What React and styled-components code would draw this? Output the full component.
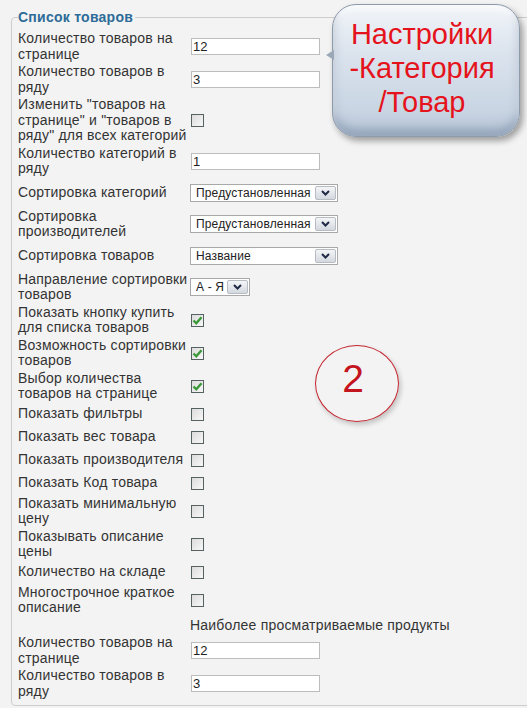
import React from 'react'
import styled, { createGlobalStyle } from 'styled-components'

const GlobalStyle = createGlobalStyle`
  html, body {
    margin: 0;
    padding: 0;
    background: #f3f3f3;
    overflow: hidden;
  }
  body {
    font-family: "Liberation Sans", Arial, sans-serif;
    font-size: 14px;
    color: #333;
  }
`

const Page = styled.div`
  position: relative;
  width: 527px;
  height: 708px;
  padding: 9px 0 0 11px;
  box-sizing: border-box;
  overflow: hidden;
`

const Fieldset = styled.fieldset`
  margin: 0 -30px 0 0;
  padding: 5px 0 5px 6px;
  border: 1px solid #cdcdcd;
  border-radius: 4px;
  min-width: 0;
`

const Legend = styled.legend`
  padding: 0 2px 0 0;
  font-weight: bold;
  font-size: 14px;
  letter-spacing: 0.25px;
  line-height: 16px;
  color: #2d6b98;
`

const Row = styled.div`
  display: flex;
  align-items: center;
  padding: 1px 0;
  line-height: 15.5px;
`

const Label = styled.div`
  width: 172px;
  flex-shrink: 0;
  white-space: pre-line;
  letter-spacing: 0.2px;
`

const Field = styled.div`
  display: flex;
  align-items: center;
`

const TextInput = styled.input`
  box-sizing: border-box;
  width: 129px;
  height: 17px;
  margin: 0 0 0 1px;
  padding: 0 1px;
  border: 1px solid #bdbdbd;
  background: #fff;
  font: 13px "Liberation Sans", Arial, sans-serif;
  color: #222;
  outline: none;
`

const SelectBox = styled.div`
  box-sizing: border-box;
  display: flex;
  align-items: center;
  width: ${(p) => p.$width}px;
  height: 18px;
  margin: 5px 0;
  border: 1px solid #a9a9a9;
  background: #fff;
`

const SelectText = styled.select`
  appearance: none;
  flex: 1;
  min-width: 0;
  height: 16px;
  border: none;
  padding: 0 0 0 5px;
  background: transparent;
  font: 12px "Liberation Sans", Arial, sans-serif;
  letter-spacing: 0.15px;
  color: #222;
  outline: none;
`

const Arrow = styled.span`
  box-sizing: border-box;
  display: flex;
  align-items: center;
  justify-content: center;
  flex-shrink: 0;
  width: 21px;
  height: 14px;
  margin-right: 1px;
  border: 1px solid #b7bcc3;
  border-radius: 2px;
  background: linear-gradient(#f4f5f7, #d3d8df);
`

const Box = styled.span`
  box-sizing: border-box;
  display: flex;
  align-items: center;
  justify-content: center;
  width: 13px;
  height: 13px;
  margin: 4px 0 4px 1px;
  border: 1px solid #566262;
  background: linear-gradient(135deg, #dcdcdc, #f7f7f7);
`

const SubHeading = styled.div`
  letter-spacing: 0.2px;
`

const Bubble = styled.div`
  position: absolute;
  left: 332px;
  top: 4px;
  width: 188px;
  height: 133px;
  box-sizing: border-box;
  padding: 12px 8px 0 0;
  border: 1px solid #8e9bab;
  border-radius: 24px;
  background: linear-gradient(#f2f5f9 0%, #dce4ee 35%, #c9d5e3 80%, #b6c4d5 100%);
  box-shadow: 3px 4px 6px rgba(0, 0, 0, 0.35), inset 0 -7px 10px rgba(110, 130, 158, 0.5),
    inset 0 3px 6px rgba(255, 255, 255, 0.9);
  text-align: center;
  font-size: 29px;
  line-height: 34px;
  color: #e5131c;

  &::before {
    content: '';
    position: absolute;
    left: -7px;
    top: 45px;
    border-style: solid;
    border-width: 5px 8px 5px 0;
    border-color: transparent #9aa8b8 transparent transparent;
  }
`

const Circle = styled.div`
  position: absolute;
  left: 315px;
  top: 345px;
  width: 84px;
  height: 77px;
  box-sizing: border-box;
  display: flex;
  align-items: center;
  justify-content: center;
  padding: 0 8px 9px 0;
  border: 1.5px solid #c3252e;
  border-radius: 50%;
  box-shadow: 2px 3px 5px rgba(0, 0, 0, 0.2);
  font-size: 39px;
  color: #c4141d;
`

const rows = [
  { label: 'Количество товаров на\nстранице', type: 'input', value: '12' },
  { label: 'Количество товаров в\nряду', type: 'input', value: '3' },
  { label: 'Изменить "товаров на\nстранице" и "товаров в\nряду" для всех категорий', type: 'check' },
  { label: 'Количество категорий в\nряду', type: 'input', value: '1' },
  { label: 'Сортировка категорий', type: 'select', value: 'Предустановленная', width: 148 },
  { label: 'Сортировка\nпроизводителей', type: 'select', value: 'Предустановленная', width: 148 },
  { label: 'Сортировка товаров', type: 'select', value: 'Название', width: 148 },
  { label: 'Направление сортировки\nтоваров', type: 'select', value: 'А - Я', width: 60 },
  { label: 'Показать кнопку купить\nдля списка товаров', type: 'check', checked: true },
  { label: 'Возможность сортировки\nтоваров', type: 'check', checked: true },
  { label: 'Выбор количества\nтоваров на странице', type: 'check', checked: true },
  { label: 'Показать фильтры', type: 'check' },
  { label: 'Показать вес товара', type: 'check' },
  { label: 'Показать производителя', type: 'check' },
  { label: 'Показать Код товара', type: 'check' },
  { label: 'Показать минимальную\nцену', type: 'check' },
  { label: 'Показывать описание\nцены', type: 'check' },
  { label: 'Количество на складе', type: 'check' },
  { label: 'Многострочное краткое\nописание', type: 'check' },
  { label: '', type: 'heading', value: 'Наиболее просматриваемые продукты' },
  { label: 'Количество товаров на\nстранице', type: 'input', value: '12' },
  { label: 'Количество товаров в\nряду', type: 'input', value: '3' },
]

const Checkbox = ({ checked }) => (
  <Box>
    {checked && (
      <svg width="11" height="11" viewBox="0 0 11 11">
        <path d="M1.5 5.5 L4.3 8.3 L9.5 2.2" fill="none" stroke="#3a9a3a" strokeWidth="2.4" />
      </svg>
    )}
  </Box>
)

const Select = ({ value, width }) => (
  <SelectBox $width={width}>
    <SelectText defaultValue={value}>
      <option>{value}</option>
    </SelectText>
    <Arrow>
      <svg width="9" height="6" viewBox="0 0 9 6">
        <path d="M1 1 L4.5 4.5 L8 1" fill="none" stroke="#1f2b45" strokeWidth="2" />
      </svg>
    </Arrow>
  </SelectBox>
)

const renderField = (row) => {
  if (row.type === 'input') return <TextInput defaultValue={row.value} />
  if (row.type === 'select') return <Select value={row.value} width={row.width} />
  if (row.type === 'check') return <Checkbox checked={row.checked} />
  return <SubHeading>{row.value}</SubHeading>
}

const App = () => {
  return (
    <Page>
      <GlobalStyle />
      <Fieldset>
        <Legend>Список товаров</Legend>
        {rows.map((row, i) => (
          <Row key={i}>
            <Label>{row.label}</Label>
            <Field>{renderField(row)}</Field>
          </Row>
        ))}
      </Fieldset>

      <Bubble>
        Настройки
        <br />
        -Категория
        <br />
        /Товар
      </Bubble>
      <Circle>2</Circle>
    </Page>
  )
}

export default App
